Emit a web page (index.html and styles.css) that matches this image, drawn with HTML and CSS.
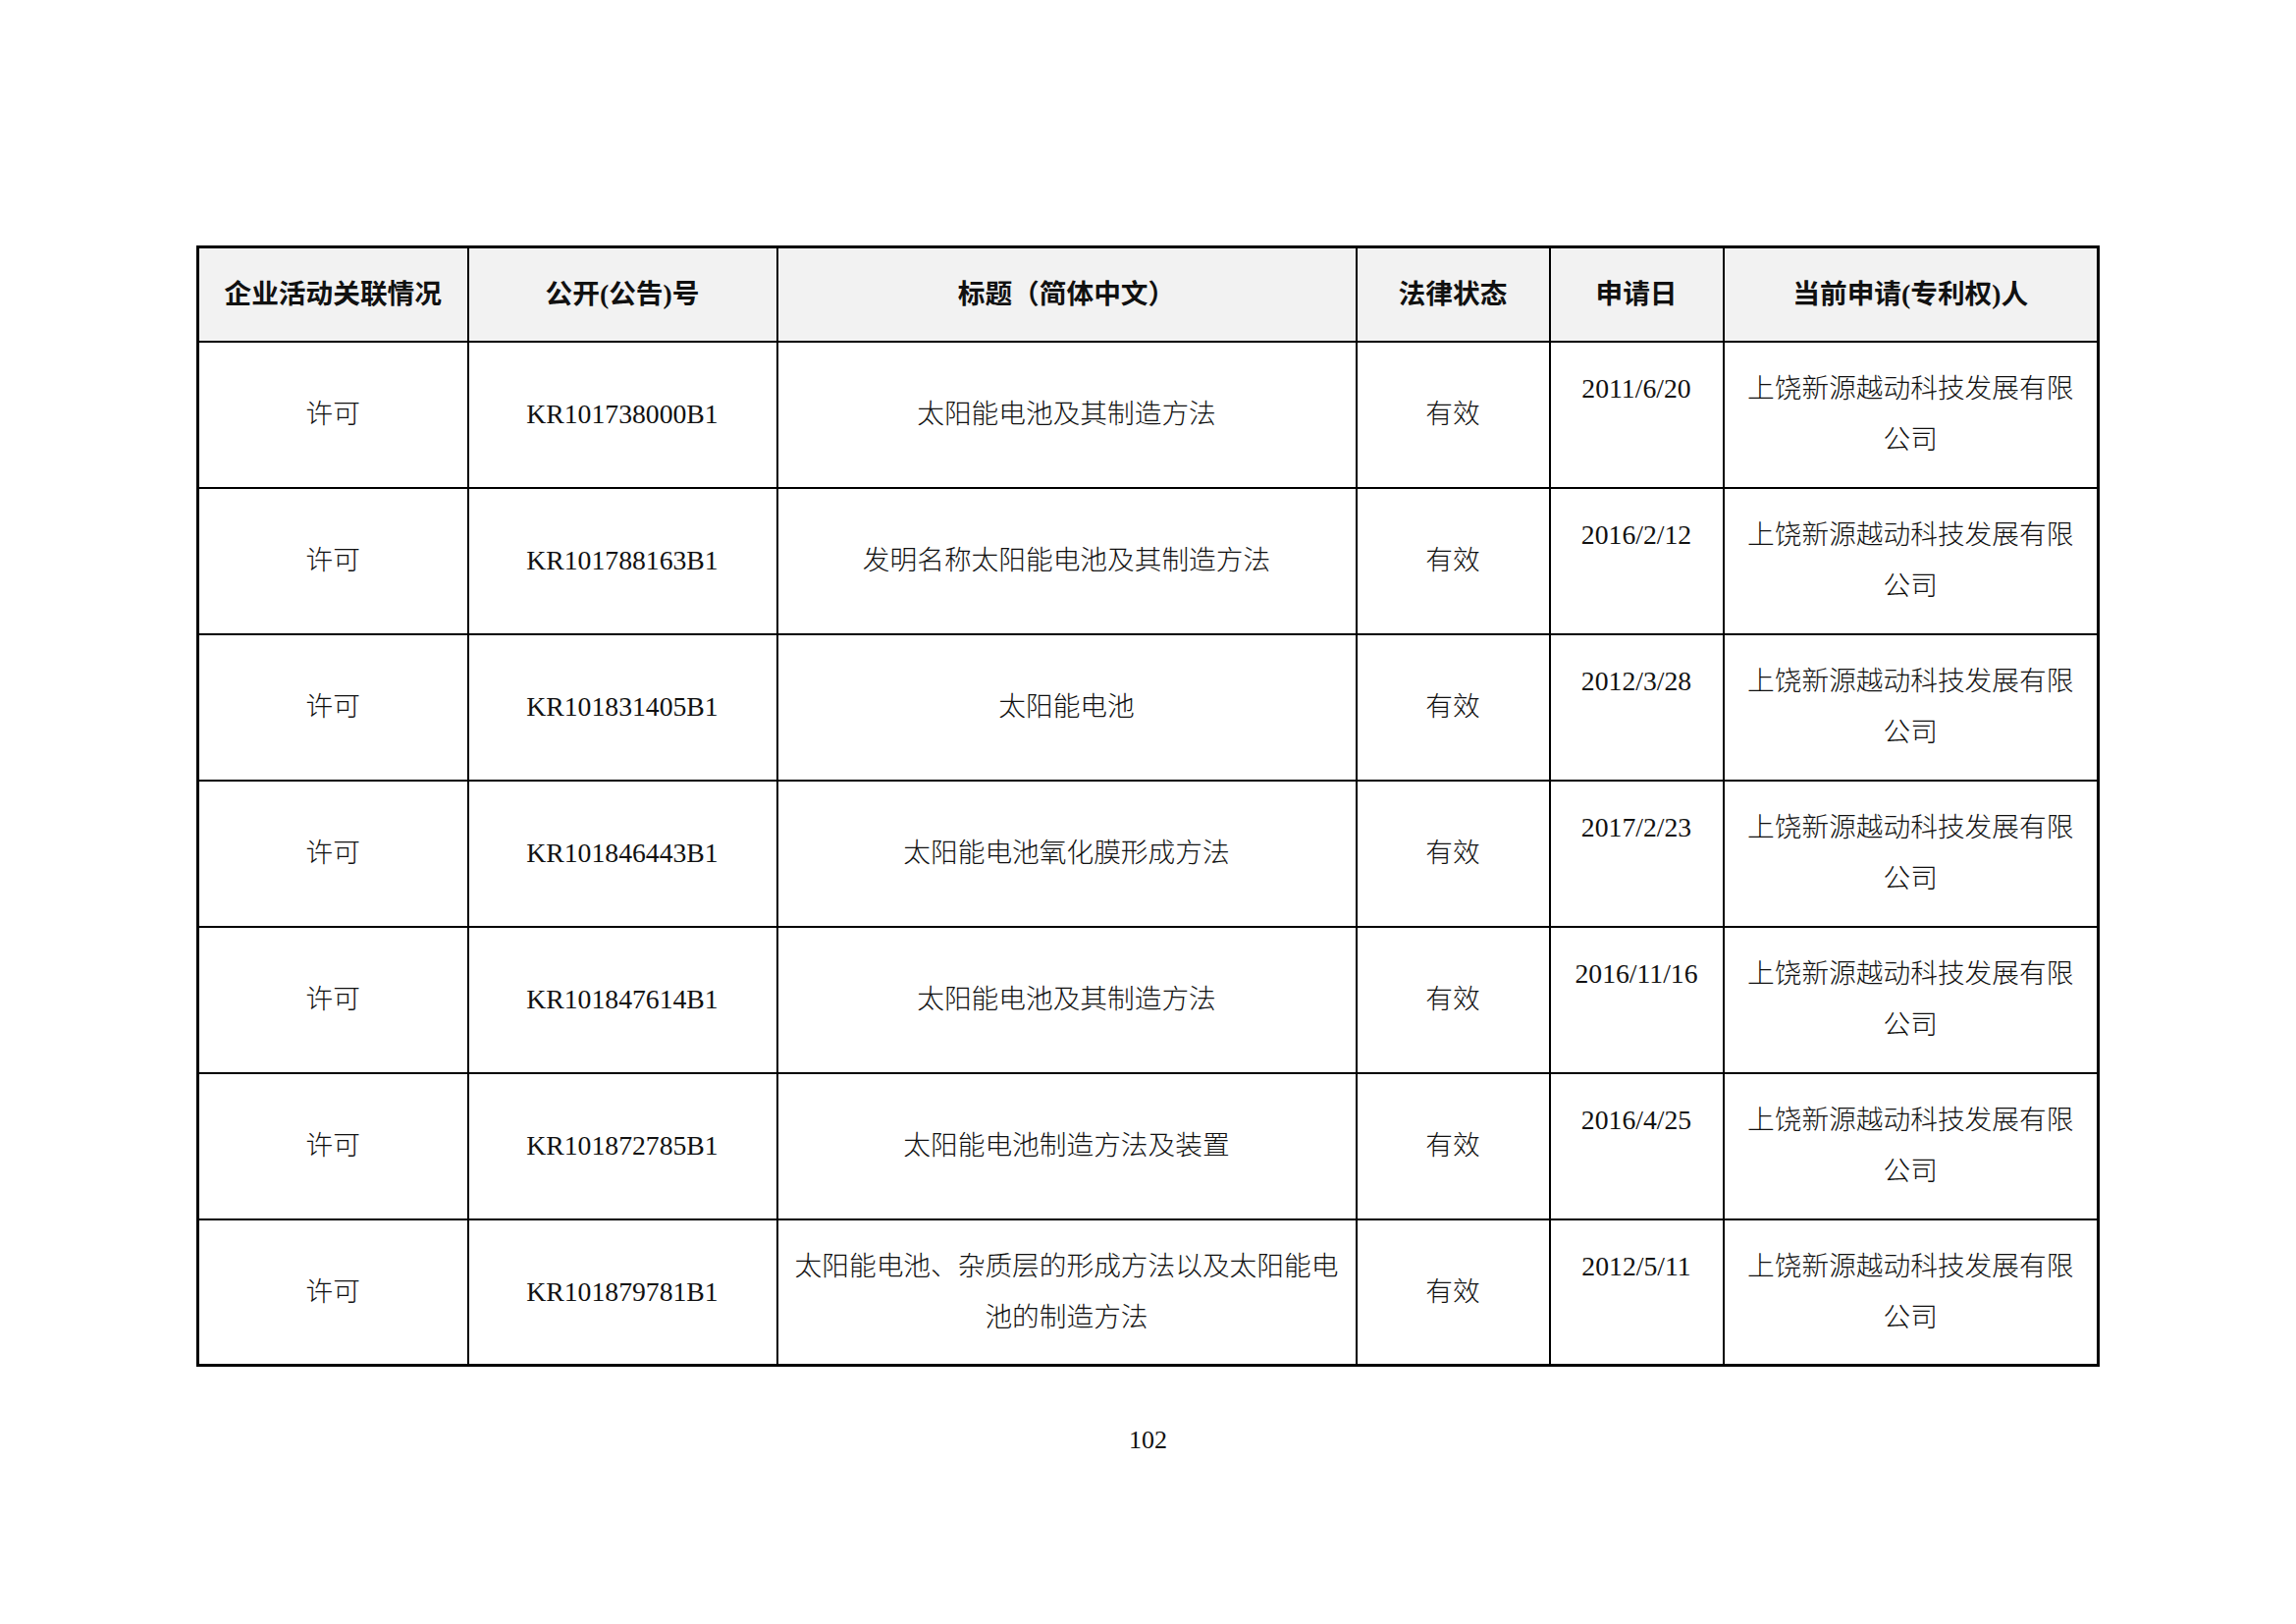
FILE: index.html
```html
<!DOCTYPE html>
<html lang="zh-CN">
<head>
<meta charset="utf-8">
<title>102</title>
<link rel="stylesheet" href="styles.css">
</head>
<body>
<div class="page">
  <table class="grid">
    <colgroup>
      <col class="c1"><col class="c2"><col class="c3"><col class="c4"><col class="c5"><col class="c6">
    </colgroup>
    <thead>
      <tr class="head">
        <th>企业活动关联情况</th>
        <th>公开(公告)号</th>
        <th>标题（简体中文）</th>
        <th>法律状态</th>
        <th>申请日</th>
        <th>当前申请(专利权)人</th>
      </tr>
    </thead>
    <tbody>
      <tr>
        <td>许可</td>
        <td>KR101738000B1</td>
        <td>太阳能电池及其制造方法</td>
        <td>有效</td>
        <td class="date">2011/6/20</td>
        <td>上饶新源越动科技发展有限公司</td>
      </tr>
      <tr>
        <td>许可</td>
        <td>KR101788163B1</td>
        <td>发明名称太阳能电池及其制造方法</td>
        <td>有效</td>
        <td class="date">2016/2/12</td>
        <td>上饶新源越动科技发展有限公司</td>
      </tr>
      <tr>
        <td>许可</td>
        <td>KR101831405B1</td>
        <td>太阳能电池</td>
        <td>有效</td>
        <td class="date">2012/3/28</td>
        <td>上饶新源越动科技发展有限公司</td>
      </tr>
      <tr>
        <td>许可</td>
        <td>KR101846443B1</td>
        <td>太阳能电池氧化膜形成方法</td>
        <td>有效</td>
        <td class="date">2017/2/23</td>
        <td>上饶新源越动科技发展有限公司</td>
      </tr>
      <tr>
        <td>许可</td>
        <td>KR101847614B1</td>
        <td>太阳能电池及其制造方法</td>
        <td>有效</td>
        <td class="date">2016/11/16</td>
        <td>上饶新源越动科技发展有限公司</td>
      </tr>
      <tr>
        <td>许可</td>
        <td>KR101872785B1</td>
        <td>太阳能电池制造方法及装置</td>
        <td>有效</td>
        <td class="date">2016/4/25</td>
        <td>上饶新源越动科技发展有限公司</td>
      </tr>
      <tr>
        <td>许可</td>
        <td>KR101879781B1</td>
        <td>太阳能电池、杂质层的形成方法以及太阳能电池的制造方法</td>
        <td>有效</td>
        <td class="date">2012/5/11</td>
        <td>上饶新源越动科技发展有限公司</td>
      </tr>
    </tbody>
  </table>
  <div class="pageno">102</div>
</div>
</body>
</html>
```

FILE: styles.css
```css
html, body {
  margin: 0;
  padding: 0;
  background: #ffffff;
}

.page {
  width: 2339px;
  padding-top: 250px;
  font-family: "Liberation Serif", "Noto Sans CJK SC", serif;
  color: #111111;
}

.grid {
  margin-left: 200px;
  width: 1936px;
  border-collapse: collapse;
  table-layout: fixed;
  border: 3px solid #000000;
}

.c1 { width: 275px; }
.c2 { width: 315px; }
.c3 { width: 590px; }
.c4 { width: 197px; }
.c5 { width: 177px; }
.c6 { width: 382px; }

.grid th,
.grid td {
  border: 2px solid #000000;
  text-align: center;
  vertical-align: middle;
  padding: 0 12px;
  font-size: 27.7px;
  line-height: 52px;
}

.grid th {
  background: #f2f2f2;
  font-weight: 700;
  color: #111111;
}

.grid td {
  font-weight: 300;
}

.head {
  height: 96px;
}

.grid tbody tr {
  height: 149px;
}

.grid td.date {
  padding-bottom: 52px;
}

.pageno {
  width: 2339px;
  text-align: center;
  margin-top: 58px;
  font-size: 26px;
  line-height: 34px;
  color: #111111;
}
```
